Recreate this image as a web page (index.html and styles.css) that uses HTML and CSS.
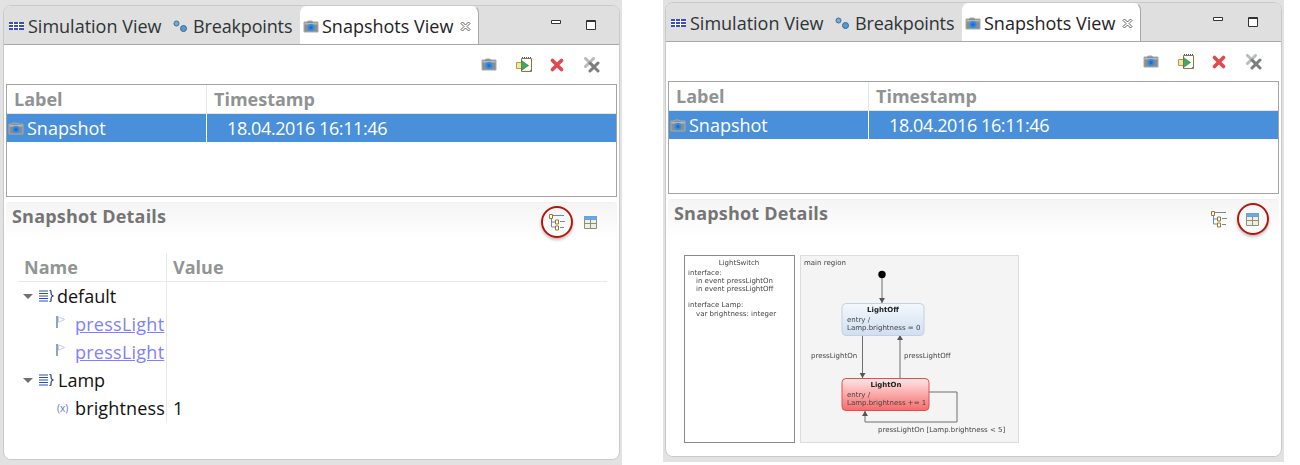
FILE: index.html
```html
<!DOCTYPE html>
<html lang="en">
<head>
    <meta charset="utf-8">
    <title>Snapshots View</title>
    <link rel="stylesheet" href="styles.css">
</head>
<body>
<svg class="sprites" xmlns="http://www.w3.org/2000/svg">
    <symbol id="i-sim" viewBox="0 0 15 8">
        <path d="M0 0h15v8H0z" fill="#3a4fb8"/>
        <path d="M0 2.500h15M0 5.500h15M4.500 0v8M9.500 0v8" stroke="#fff" stroke-width="1"/>
    </symbol>
    <symbol id="i-bp" viewBox="0 0 15 13">
        <circle cx="3.500" cy="3.500" r="2.500" fill="#7fa8c8" stroke="#3f6f99"/>
        <circle cx="10.500" cy="8.500" r="3" fill="#5a98cc" stroke="#2f6a9c"/>
    </symbol>
    <symbol id="i-cam" viewBox="0 0 16 13">
        <path d="M1 2h3l1-1h4l1 1h5v10H1z" fill="#878e93" stroke="#a6abae"/>
        <path d="M1.500 3h13v1.500h-13z" fill="#b4b8bb"/>
        <circle cx="8" cy="7.500" r="3.400" fill="#2f8ae6"/>
        <circle cx="8" cy="7.500" r="1.500" fill="#1a6cc4"/>
    </symbol>
    <symbol id="i-run" viewBox="0 0 16 17">
        <path d="M5.500 2.500h10v13h-10z" fill="#fff" stroke="#8a7a32"/>
        <path d="M6 1.500h9" stroke="#2b5a9a" stroke-dasharray="1 1"/>
        <path d="M13 15.500l2.500-2.500v2.500z" fill="#3f9a5c"/>
        <path d="M.5 6.500h5v6h-5z" fill="#f4e6a8" stroke="#bf9a34"/>
        <path d="M5.500 4.500l7 5-7 5z" fill="#45a565" stroke="#2d7d48" stroke-width=".6"/>
    </symbol>
    <symbol id="i-del" viewBox="0 0 14 14">
        <path d="M2.500 2.500l9 9M11.500 2.500l-9 9" stroke="#e2484f" stroke-width="3.600" stroke-linecap="round"/>
    </symbol>
    <symbol id="i-delall" viewBox="0 0 16 16">
        <path d="M1.500 1.500l8 8M9.500 1.500l-8 8" stroke="#b9bcbc" stroke-width="3" stroke-linecap="round"/>
        <path d="M6 6l8 8M14 6l-8 8" stroke="#7b7d7e" stroke-width="3" stroke-linecap="round"/>
    </symbol>
    <symbol id="i-min" viewBox="0 0 10 5">
        <path d="M.5.500h9v3h-9z" fill="#fff" stroke="#333"/>
    </symbol>
    <symbol id="i-max" viewBox="0 0 10 10">
        <path d="M.5.500h9v9h-9z" fill="#fff" stroke="#333"/>
        <path d="M.5 1.500h9" stroke="#333"/>
    </symbol>
    <symbol id="i-close" viewBox="0 0 11 11">
        <path d="M1 2.500L2.500 1 5.500 4 8.500 1 10 2.500 7 5.500 10 8.500 8.500 10 5.500 7 2.500 10 1 8.500 4 5.500z" fill="#fff" stroke="#3c3c3c" stroke-width=".8"/>
    </symbol>
    <symbol id="i-tree" viewBox="0 0 16 17">
        <path d="M2.500 3v10h5M2.500 8h5M4 1.500h11M11 7.500h5M11 13.500h4" fill="none" stroke="#6d87b5"/>
        <path d="M.5.500h3v4h-3zM6.500 6h3v4h-3zM6.500 12h3v4h-3z" fill="#fff" stroke="#9a7a24"/>
    </symbol>
    <symbol id="i-table" viewBox="0 0 13 13">
        <path d="M.5.500h12v12H.500z" fill="#eef0e6" stroke="#8f8f74"/>
        <path d="M.5.500h12v3H.500z" fill="#6aa8e6" stroke="#6aa0d8"/>
        <path d="M.5 7.500h12M6.500 3.500v9" stroke="#8f8f74"/>
    </symbol>
    <symbol id="i-group" viewBox="0 0 15 12">
        <path d="M0 1h9M0 3.500h9M0 6h9M0 8.500h9M0 11h9" stroke="#2a50b0" stroke-width="1"/>
        <path d="M10.500.500c2 0 1.500 1 1.500 2.500s.5 2.500 2 3c-1.500.5-2 1.500-2 3s.5 2.500-1.500 2.500" fill="none" stroke="#1d3a88" stroke-width="1.200"/>
    </symbol>
    <symbol id="i-flag" viewBox="0 0 9 12">
        <path d="M1 0v12" stroke="#8ba3cb" stroke-width="2"/>
        <path d="M2.500.800l6 2.700-6 2.700z" fill="#fff" stroke="#b3c2dc" stroke-width=".8"/>
    </symbol>
</svg>

<div class="shot shot-left">
    <div class="panel">
        <div class="tabbar">
            <div class="tab tab-sim"><svg class="ic-sim"><use href="#i-sim"/></svg>Simulation View</div>
            <div class="tab tab-bp"><svg class="ic-bp"><use href="#i-bp"/></svg>Breakpoints</div>
            <div class="tab tab-active"><svg class="ic-cam"><use href="#i-cam"/></svg>Snapshots View<svg class="ic-close"><use href="#i-close"/></svg></div>
            <div class="winbtns"><svg class="ic-min"><use href="#i-min"/></svg><svg class="ic-max"><use href="#i-max"/></svg></div>
        </div>
        <div class="toolbar">
            <svg class="ic-cam tool-cam"><use href="#i-cam"/></svg>
            <svg class="ic-run"><use href="#i-run"/></svg>
            <svg class="ic-del"><use href="#i-del"/></svg>
            <svg class="ic-delall"><use href="#i-delall"/></svg>
        </div>
        <div class="snaps">
            <div class="snaps-head"><div class="col-label">Label</div><div class="col-time">Timestamp</div></div>
            <div class="snaps-row"><div class="col-label"><svg class="ic-cam"><use href="#i-cam"/></svg>Snapshot</div><div class="col-time stamp">18.04.2016 16:11:46</div></div>
        </div>
        <div class="details">
            <div class="details-head">
                <h2>Snapshot Details</h2>
                <div class="details-btns">
                    <span class="btn marked"><svg class="ic-tree"><use href="#i-tree"/></svg></span>
                    <span class="btn"><svg class="ic-table"><use href="#i-table"/></svg></span>
                </div>
            </div>
            <div class="tree">
                <div class="tree-head"><div class="c-name">Name</div><div class="c-value">Value</div></div>
                <div class="tree-row"><div class="c-name"><i class="twist"></i><svg class="ic-group"><use href="#i-group"/></svg><span class="gap-a">default</span></div><div class="c-value"></div></div>
                <div class="tree-row"><div class="c-name lvl2"><svg class="ic-flag"><use href="#i-flag"/></svg><a class="ev">pressLight</a></div><div class="c-value"></div></div>
                <div class="tree-row"><div class="c-name lvl2"><svg class="ic-flag"><use href="#i-flag"/></svg><a class="ev">pressLight</a></div><div class="c-value"></div></div>
                <div class="tree-row"><div class="c-name"><i class="twist"></i><svg class="ic-group"><use href="#i-group"/></svg><span class="gap-b">Lamp</span></div><div class="c-value"></div></div>
                <div class="tree-row"><div class="c-name lvl2"><span class="varx">(x)</span><span class="attr">brightness</span></div><div class="c-value">1</div></div>
            </div>
        </div>
    </div>
</div>

<div class="shot shot-right">
    <div class="panel">
        <div class="tabbar">
            <div class="tab tab-sim"><svg class="ic-sim"><use href="#i-sim"/></svg>Simulation View</div>
            <div class="tab tab-bp"><svg class="ic-bp"><use href="#i-bp"/></svg>Breakpoints</div>
            <div class="tab tab-active"><svg class="ic-cam"><use href="#i-cam"/></svg>Snapshots View<svg class="ic-close"><use href="#i-close"/></svg></div>
            <div class="winbtns"><svg class="ic-min"><use href="#i-min"/></svg><svg class="ic-max"><use href="#i-max"/></svg></div>
        </div>
        <div class="toolbar">
            <svg class="ic-cam tool-cam"><use href="#i-cam"/></svg>
            <svg class="ic-run"><use href="#i-run"/></svg>
            <svg class="ic-del"><use href="#i-del"/></svg>
            <svg class="ic-delall"><use href="#i-delall"/></svg>
        </div>
        <div class="snaps">
            <div class="snaps-head"><div class="col-label">Label</div><div class="col-time">Timestamp</div></div>
            <div class="snaps-row"><div class="col-label"><svg class="ic-cam"><use href="#i-cam"/></svg>Snapshot</div><div class="col-time stamp">18.04.2016 16:11:46</div></div>
        </div>
        <div class="details">
            <div class="details-head">
                <h2>Snapshot Details</h2>
                <div class="details-btns">
                    <span class="btn"><svg class="ic-tree"><use href="#i-tree"/></svg></span>
                    <span class="btn marked"><svg class="ic-table"><use href="#i-table"/></svg></span>
                </div>
            </div>
            <svg class="statechart" viewBox="0 0 336 190" width="336" height="190">
                <defs>
                    <linearGradient id="g-off" x1="0" y1="0" x2="0" y2="1">
                        <stop offset="0" stop-color="#f4f8fc"/><stop offset="1" stop-color="#cfdff2"/>
                    </linearGradient>
                    <linearGradient id="g-on" x1="0" y1="0" x2="0" y2="1">
                        <stop offset="0" stop-color="#ffe6e6"/><stop offset="1" stop-color="#f76a6a"/>
                    </linearGradient>
                    <marker id="arr" markerWidth="5" markerHeight="6" refX="5" refY="3" orient="auto">
                        <path d="M0 0l5 3-5 3z" fill="#555"/>
                    </marker>
                </defs>
                <rect x=".5" y=".5" width="110" height="187" fill="#fff" stroke="#8a8a8a"/>
                <g class="sc-text">
                    <text x="55" y="10" text-anchor="middle">LightSwitch</text>
                    <text x="4" y="20">interface:</text>
                    <text x="12" y="28">in event pressLightOn</text>
                    <text x="12" y="36">in event pressLightOff</text>
                    <text x="4" y="52">interface Lamp:</text>
                    <text x="12" y="61">var brightness: integer</text>
                </g>
                <rect x="116.500" y=".5" width="218" height="187" fill="#f4f4f4" stroke="#dcdcdc"/>
                <text class="sc-text" x="120" y="10">main region</text>
                <circle cx="198" cy="19.500" r="3.700" fill="#000"/>
                <g fill="none" stroke="#6f6f6f" stroke-width="1">
                    <path d="M198 23v25" marker-end="url(#arr)"/>
                    <path d="M178.500 80v43" marker-end="url(#arr)"/>
                    <path d="M216 123V80" marker-end="url(#arr)"/>
                    <path d="M245 137h28v30h-92v-11" marker-end="url(#arr)"/>
                </g>
                <rect x="158" y="48.500" width="82" height="32" rx="4" fill="url(#g-off)" stroke="#c5d0de"/>
                <rect x="158" y="123.500" width="87" height="32" rx="4" fill="url(#g-on)" stroke="#e05050"/>
                <g class="sc-text">
                    <text class="sc-bold" x="199" y="57" text-anchor="middle">LightOff</text>
                    <text x="163" y="67">entry /</text>
                    <text x="163" y="75">Lamp.brightness = 0</text>
                    <text class="sc-bold" x="202" y="132" text-anchor="middle">LightOn</text>
                    <text x="163" y="142">entry /</text>
                    <text x="163" y="150">Lamp.brightness += 1</text>
                    <text x="127" y="103">pressLightOn</text>
                    <text x="220" y="103">pressLightOff</text>
                    <text x="194" y="177">pressLightOn [Lamp.brightness &lt; 5]</text>
                </g>
            </svg>
        </div>
    </div>
</div>
</body>
</html>
```

FILE: styles.css
```css
html, body {
    margin: 0;
    padding: 0;
    background: #fff;
}
body {
    display: flex;
    height: 465px;
    overflow: hidden;
    font-family: "Open Sans", "Noto Sans", sans-serif;
    font-size: 18px;
}
.sprites {
    display: none;
}
svg {
    display: block;
    flex: none;
    overflow: visible;
}

/* the two screenshots */
.shot {
    background: #e2e2e2;
    box-sizing: border-box;
}
.shot-left {
    width: 622px;
    height: 465px;
    padding: 5px 0 0 3px;
}
.shot-right {
    width: 621px;
    height: 462px;
    margin-left: 41px;
    padding: 2px 0 0 2px;
}
.panel {
    width: 617px;
    height: 455px;
    box-sizing: border-box;
    background: #fff;
    border: 1px solid #c9c9c9;
    border-radius: 8px;
    overflow: hidden;
}

/* tabs */
.tabbar {
    display: flex;
    height: 39px;
    box-sizing: border-box;
    background: #dfdfdf;
    border-bottom: 1px solid #a8a8a8;
    color: #2e3436;
}
.tab {
    display: flex;
    align-items: center;
    height: 38px;
    box-sizing: border-box;
    padding-top: 2px;
    white-space: nowrap;
}
.tab-sim {
    width: 168px;
    padding-left: 5px;
}
.tab-bp {
    width: 127px;
    padding-left: 1px;
    letter-spacing: -.15px;
}
.tab-active {
    width: 180px;
    height: 39px;
    padding-left: 3px;
    background: #fff;
    border: 1px solid #a8a8a8;
    border-top-color: #e8e8e8;
    border-left-color: #e0e0e0;
    border-bottom: 0;
    border-radius: 8px 8px 0 0;
    margin-top: -1px;
    color: #1f2325;
}
.ic-sim { width: 15px; height: 8px; margin-right: 4px; }
.ic-bp { width: 15px; height: 13px; margin-right: 5px; }
.ic-cam { width: 16px; height: 13px; margin-right: 3px; }
.ic-close { width: 11px; height: 11px; margin-left: 7px; }
.winbtns {
    display: flex;
    align-items: center;
    margin-left: 72px;
    height: 38px;
}
.ic-min { width: 10px; height: 5px; margin-right: 25px; position: relative; top: -3px; }
.ic-max { width: 10px; height: 10px; }

/* toolbar */
.toolbar {
    display: flex;
    align-items: center;
    height: 39px;
    padding-left: 477px;
}
.tool-cam { margin-right: 19px; }
.ic-run { width: 16px; height: 17px; margin-right: 18px; }
.ic-del { width: 14px; height: 14px; margin-right: 20px; }
.ic-delall { width: 16px; height: 16px; }

/* snapshot table */
.snaps {
    height: 113px;
    width: 611px;
    margin-left: 2px;
    box-sizing: border-box;
    border: 1px solid #a3a3a3;
}
.snaps-head, .snaps-row {
    display: flex;
    align-items: stretch;
}
.snaps-head {
    height: 29px;
    box-sizing: border-box;
    border-bottom: 1px solid #e6e6e6;
    font-weight: 700;
    color: #8f9394;
}
.snaps-row {
    height: 28px;
    background: #4a8fd9;
    color: #fff;
}
.col-label {
    display: flex;
    align-items: center;
    width: 199px;
    padding-left: 1px;
    box-sizing: border-box;
}
.snaps-head .col-label {
    padding-left: 7px;
}
.col-time {
    display: flex;
    align-items: center;
    flex: 1;
    padding-left: 7px;
    border-left: 1px solid #e6e6e6;
}
.snaps-row .col-time {
    border-left-color: #fff;
}
.stamp {
    padding-left: 20px;
    letter-spacing: -.4px;
}

/* details section */
.details {
    width: 611px;
    height: 257px;
    margin: 5px 0 0 2px;
    box-sizing: border-box;
    border-radius: 4px 4px 0 0;
    border-top: 1px solid #f0f0f0;
    background: linear-gradient(#f5f5f5, #fff 38px);
}
.details-head {
    display: flex;
    justify-content: space-between;
    height: 50px;
}
.details-head h2 {
    margin: 0;
    padding: 1px 0 0 6px;
    font-size: 18px;
    letter-spacing: .2px;
    font-weight: 700;
    color: #757575;
}
.details-btns {
    display: flex;
    padding: 11px 18px 0 0;
}
.btn {
    position: relative;
    display: block;
    width: 16px;
    height: 17px;
    margin-left: 18px;
}
.ic-tree { width: 16px; height: 17px; }
.ic-table { width: 13px; height: 13px; margin: 2px 0 0 1px; }
.marked::after {
    content: "";
    position: absolute;
    left: -8px;
    top: -8px;
    width: 28px;
    height: 28px;
    border: 2.500px solid #b5170e;
    border-radius: 50%;
    box-shadow: 0 2px 3px rgba(0, 0, 0, .25);
}

/* tree */
.tree {
    margin: 0 10px 0 12px;
    line-height: 28px;
    color: #111;
}
.tree-head, .tree-row {
    display: flex;
    height: 28px;
}
.tree-head {
    box-sizing: border-box;
    height: 29px;
    border-bottom: 1px solid #e9e9e9;
    font-weight: 700;
    color: #919595;
}
.c-name {
    display: flex;
    align-items: center;
    width: 149px;
    box-sizing: border-box;
    border-right: 1px solid #e9e9e9;
    padding-left: 5px;
    white-space: nowrap;
}
.tree-head .c-name {
    padding-left: 6px;
}
.c-value {
    padding-left: 6px;
}
.twist {
    width: 0;
    height: 0;
    border: 5px solid transparent;
    border-top: 5px solid #707070;
    border-bottom: 0;
    margin-right: 6px;
}
.ic-group { width: 15px; height: 12px; }
.gap-a { margin-left: 3px; }
.gap-b { margin-left: 4px; }
.lvl2 { padding-left: 38px; }
.ic-flag { width: 9px; height: 12px; margin: -4px 10px 0 0; }
.ev {
    color: #7f7fff;
    text-decoration: underline;
    letter-spacing: .25px;
}
.attr {
    letter-spacing: .15px;
}
.varx {
    width: 18px;
    margin-left: 1px;
    font-size: 10px;
    color: #5f77ad;
}

/* statechart picture */
.statechart {
    margin: 5px 0 0 16px;
    filter: blur(.25px);
}
.sc-text, .sc-text text {
    font-family: "DejaVu Sans", sans-serif;
    font-size: 7px;
    fill: #444;
}
.sc-text .sc-bold {
    font-weight: 700;
    fill: #222;
}
```
